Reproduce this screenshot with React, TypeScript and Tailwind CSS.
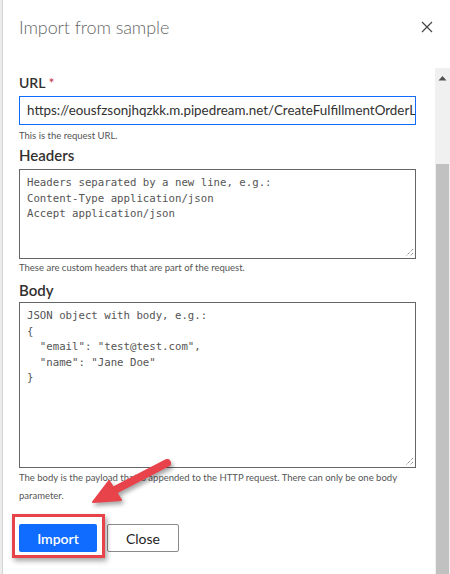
import React from "react";

const sans = { fontFamily: 'Lato, "Noto Sans", sans-serif' };
const mono = { fontFamily: '"DejaVu Sans Mono", "Liberation Mono", monospace' };

function Resize() {
  return (
    <svg className="absolute right-[1px] bottom-[1px]" width="9" height="9" viewBox="0 0 9 9">
      <path d="M8 1 L1 8 M8 5 L5 8" stroke="#666" strokeWidth="1" strokeDasharray="1 1" />
    </svg>
  );
}

export default function App() {
  return (
    <div className="relative w-[450px] h-[574px] overflow-hidden bg-white flex" style={sans}>
      <div className="w-[3px] h-full bg-[#ececec] border-r border-[#d4d4d4] shrink-0" />
      <div className="flex-1 flex flex-col min-w-0">
        <div className="h-[68px] shrink-0 flex items-start justify-between pl-[16px] pr-[16px]">
          <div className="mt-[13px] text-[18px] leading-[28px] font-light text-[#666] tracking-[-0.1px]">Import from sample</div>
          <svg className="mt-[20px]" width="14" height="14" viewBox="0 0 14 14">
            <path d="M2 2 L12 12 M12 2 L2 12" stroke="#444" strokeWidth="1.2" />
          </svg>
        </div>
        <div className="flex-1 flex min-h-0">
          <div className="flex-1 pl-[16px] pt-[5px] flex flex-col">
            <div className="text-[14px] leading-[20px] font-semibold text-[#323130]">
              URL <span className="text-[#c4314b] font-normal">*</span>
            </div>
            <div className="mt-[3px] w-[397px] h-[29px] border border-[#0f6cff] flex items-center pl-[7px] overflow-hidden whitespace-nowrap text-[13.4px] text-[#323130]">
              https://eousfzsonjhqzkk.m.pipedream.net/CreateFulfillmentOrderLine
            </div>
            <div className="mt-[4px] text-[9.5px] leading-[14px] text-[#555]">This is the request URL.</div>
            <div className="mt-[2px] text-[15px] leading-[20px] font-semibold text-[#323130]">Headers</div>
            <div
              className="relative mt-[4px] w-[397px] h-[90px] border border-[#666] pl-[7px] pt-[5px] text-[10.7px] leading-[15.5px] text-[#555] whitespace-pre"
              style={mono}
            >
              {"Headers separated by a new line, e.g.:\nContent-Type application/json\nAccept application/json"}
              <Resize />
            </div>
            <div className="mt-[2px] text-[9.5px] leading-[14px] text-[#555]">These are custom headers that are part of the request.</div>
            <div className="mt-[5px] text-[15px] leading-[20px] font-semibold text-[#323130]">Body</div>
            <div
              className="relative mt-[2px] w-[397px] h-[166px] border border-[#666] pl-[7px] pt-[5px] text-[10.7px] leading-[15.5px] text-[#555] whitespace-pre"
              style={mono}
            >
              {'JSON object with body, e.g.:\n{\n  "email": "test@test.com",\n  "name": "Jane Doe"\n}'}
              <Resize />
            </div>
            <div className="mt-[1px] w-[395px] text-[9.5px] leading-[18px] text-[#555]">
              The body is the payload that is appended to the HTTP request. There can only be one body parameter.
            </div>
            <div className="mt-[19px] flex gap-[10px]">
              <div className="w-[78px] h-[28px] rounded-[2px] bg-[#0f6cff] text-white text-[14px] font-semibold flex items-center justify-center">
                Import
              </div>
              <div className="w-[72px] h-[28px] rounded-[2px] border border-[#8a8a8a] text-[#222] text-[14px] flex items-center justify-center">
                Close
              </div>
            </div>
          </div>
          <div className="w-[15px] h-full bg-[#f0f0f0] shrink-0 flex flex-col items-center">
            <svg className="mt-[7px]" width="9" height="6" viewBox="0 0 9 6">
              <path d="M0.5 5.5 L4.5 1 L8.5 5.5 Z" fill="#505050" />
            </svg>
            <div className="mt-[83px] w-[13px] flex-1 bg-[#c1c1c1]" />
          </div>
        </div>
      </div>

      {/* red highlight box */}
      <div className="absolute left-[12px] top-[514px] w-[93px] h-[44px] border-[3px] border-[#e8434a] shadow-[2px_3px_5px_rgba(0,0,0,0.35)]" />
      {/* red arrow */}
      <svg className="absolute left-[85px] top-[455px]" width="95" height="60" viewBox="0 0 95 60" style={{ filter: "drop-shadow(2px 3px 2px rgba(0,0,0,0.35))" }}>
        <path d="M82 8 L28 36" stroke="#e8434a" strokeWidth="8" strokeLinecap="round" />
        <path d="M8 47 L24 26 L36 45 Z" fill="#e8434a" stroke="#e8434a" strokeWidth="2" strokeLinejoin="round" />
      </svg>
    </div>
  );
}
